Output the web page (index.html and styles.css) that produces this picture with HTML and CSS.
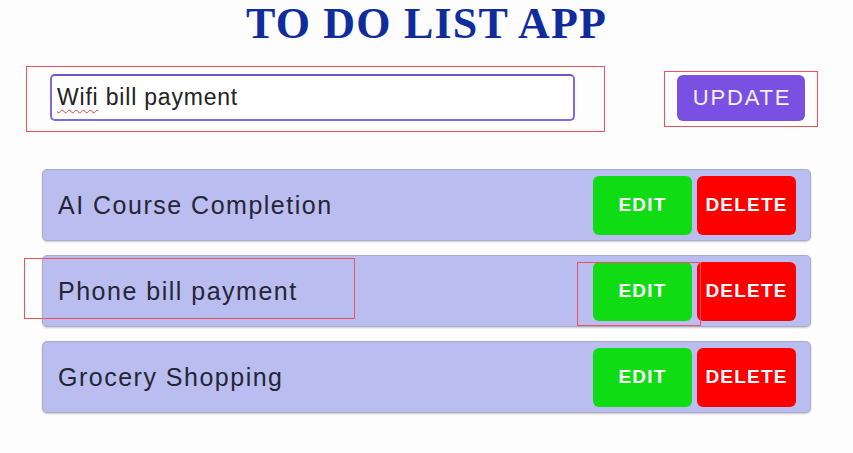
FILE: index.html
```html
<!DOCTYPE html>
<html lang="en">
<head>
<meta charset="utf-8">
<title>To Do List App</title>
<link rel="stylesheet" href="styles.css">
</head>
<body>
<main class="app">
  <h1 class="title">TO DO LIST APP</h1>
  <div class="form">
    <div class="input" role="textbox"><span class="input-text"><span class="misspelled">Wifi</span> bill payment</span></div>
    <button class="btn-update">UPDATE</button>
  </div>
  <ul class="list">
    <li class="item">
      <span class="item-text">AI Course Completion</span>
      <div class="actions">
        <button class="btn btn-edit">EDIT</button>
        <button class="btn btn-delete">DELETE</button>
      </div>
    </li>
    <li class="item">
      <span class="item-text">Phone bill payment</span>
      <div class="actions">
        <button class="btn btn-edit">EDIT</button>
        <button class="btn btn-delete">DELETE</button>
      </div>
    </li>
    <li class="item">
      <span class="item-text">Grocery Shopping</span>
      <div class="actions">
        <button class="btn btn-edit">EDIT</button>
        <button class="btn btn-delete">DELETE</button>
      </div>
    </li>
  </ul>
  <div class="mark mark-input"></div>
  <div class="mark mark-update"></div>
  <div class="mark mark-label"></div>
  <div class="mark mark-edit"></div>
</main>
</body>
</html>
```
FILE: styles.css
```css
* { box-sizing: border-box; }
html, body { margin: 0; padding: 0; }
body {
  background: #fdfdfe;
  font-family: "Liberation Sans", Arial, sans-serif;
  color: #222;
  width: 853px;
  height: 453px;
  overflow: hidden;
}
.app {
  position: relative;
  width: 853px;
  height: 453px;
}
.title {
  margin: 0;
  padding-top: 2px;
  text-align: center;
  font-family: "Liberation Serif", "Times New Roman", serif;
  font-weight: bold;
  font-size: 44px;
  line-height: 44px;
  letter-spacing: 1.2px;
  color: #102c9c;
}
.form {
  display: flex;
  align-items: center;
  margin-top: 28px;
  padding-left: 50px;
  gap: 102px;
}
.input {
  width: 525px;
  height: 47px;
  border: 2px solid #7b6ae8;
  border-top-color: #6a58c8;
  border-radius: 5px;
  background: #fff;
  padding-left: 5px;
  display: flex;
  align-items: center;
  font-size: 23px;
  letter-spacing: 0.8px;
  color: #222;
}
.misspelled {
  text-decoration: underline wavy #e04040;
  text-decoration-thickness: 1px;
  text-underline-offset: 4px;
}
.btn-update {
  width: 128px;
  height: 46px;
  border: none;
  border-radius: 6px;
  background: #7a50e2;
  color: #f4f0ff;
  font-family: "Liberation Sans", Arial, sans-serif;
  font-size: 22px;
  letter-spacing: 1.8px;
  padding: 0 0 0 2px;
}
.list {
  list-style: none;
  margin: 48px 0 0 42px;
  padding: 0;
  width: 769px;
  display: flex;
  flex-direction: column;
  gap: 14px;
}
.item {
  height: 72px;
  display: flex;
  align-items: center;
  justify-content: space-between;
  background: #b9bdf0;
  border: 1px solid #a9abc8;
  border-radius: 5px;
  box-shadow: 0 1px 2px rgba(0,0,0,0.2);
  padding: 0 14px 0 15px;
}
.item-text {
  font-size: 25px;
  letter-spacing: 1.5px;
  color: #252535;
}
.actions {
  display: flex;
  gap: 5px;
}
.btn {
  width: 99px;
  height: 59px;
  border: none;
  border-radius: 6px;
  color: #fff;
  font-family: "Liberation Sans", Arial, sans-serif;
  font-weight: bold;
  font-size: 19px;
  letter-spacing: 1.2px;
  padding: 0;
}
.btn-edit { background: #10dc14; }
.btn-delete { background: #ff0000; }
.mark {
  position: absolute;
  border: 1.5px solid #f2505c;
  pointer-events: none;
}
.mark-input { left: 26px; top: 66px; width: 579px; height: 66px; }
.mark-update { left: 664px; top: 71px; width: 154px; height: 56px; }
.mark-label { left: 24px; top: 258px; width: 331px; height: 61px; }
.mark-edit { left: 577px; top: 262px; width: 124px; height: 64px; }
```
